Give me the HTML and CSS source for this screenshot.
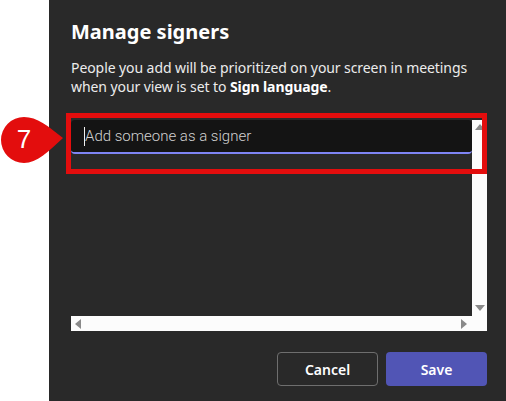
FILE: index.html
```html
<!DOCTYPE html>
<html lang="en">
<head>
    <meta charset="UTF-8">
    <meta name="viewport" content="width=device-width, initial-scale=1.0">
    <title>Manage signers</title>
    <link rel="stylesheet" href="styles.css">
</head>
<body>
    <div class="page">
        <div class="gutter">
            <div class="callout">
                <svg width="64" height="52" viewBox="0 0 64 52">
                    <path d="M24 3 A23 23 0 1 0 24 49 C37 49 48 38 63 24 C48 12 37 3 24 3 Z" fill="#e30d0d"/>
                </svg>
                <span class="callout-num">7</span>
            </div>
        </div>
        <div class="dialog">
            <h1>Manage signers</h1>
            <p class="desc">People you add will be prioritized on your screen in meetings when your view is set to <b>Sign language</b>.</p>

            <div class="picker">
                <div class="picker-body">
                    <div class="field">
                        <span class="caret"></span>
                        <span class="placeholder">Add someone as a signer</span>
                    </div>
                </div>
                <div class="vbar">
                    <span class="arrow up"></span>
                    <span class="arrow down"></span>
                </div>
                <div class="hbar">
                    <span class="arrow left"></span>
                    <span class="arrow right"></span>
                </div>
                <div class="corner"></div>
                <div class="highlight"></div>
            </div>

            <div class="actions">
                <button class="btn cancel">Cancel</button>
                <button class="btn save">Save</button>
            </div>
        </div>
    </div>
</body>
</html>
```

FILE: styles.css
```css
body {
    margin: 0;
    font-family: "Segoe UI", "Noto Sans", sans-serif;
    background-color: white;
}
.page {
    display: flex;
    height: 401px;
}
.gutter {
    width: 49px;
    position: relative;
    flex-shrink: 0;
}
.callout {
    position: absolute;
    left: 0;
    top: 114px;
    width: 64px;
    height: 52px;
}
.callout svg {
    display: block;
}
.callout-num {
    position: absolute;
    left: 2px;
    top: 0;
    width: 44px;
    line-height: 50px;
    text-align: center;
    color: white;
    font-family: "Liberation Sans", Arial, sans-serif;
    font-size: 26px;
}
.dialog {
    flex: 1;
    background-color: #292929;
    padding: 18px 19px 0 22px;
    display: flex;
    flex-direction: column;
}
h1 {
    color: white;
    font-size: 20px;
    font-weight: 700;
    line-height: 28px;
    margin: 0 0 12px 0;
}
.desc {
    color: #ececec;
    font-size: 14px;
    letter-spacing: -0.08px;
    line-height: 19px;
    margin: 0 0 24px 0;
}
.desc b {
    color: white;
}
.picker {
    position: relative;
    display: grid;
    grid-template-columns: 1fr 15px;
    grid-template-rows: 196px 15px;
}
.picker-body {
    background-color: #292929;
}
.field {
    height: 32px;
    background-color: #141414;
    border-bottom: 2px solid #7f85f5;
    border-radius: 4px;
    display: flex;
    align-items: center;
    padding-left: 13px;
}
.caret {
    width: 1px;
    height: 19px;
    background-color: #f0f0f0;
}
.placeholder {
    color: #d2d2d2;
    font-family: Roboto, sans-serif;
    font-weight: 300;
    font-size: 15px;
}
.vbar, .hbar, .corner {
    background-color: #fcfcfc;
}
.vbar {
    display: flex;
    flex-direction: column;
    justify-content: space-between;
    align-items: center;
    padding: 4px 0 5px;
}
.hbar {
    display: flex;
    justify-content: space-between;
    align-items: center;
    padding: 0 5px 0 4px;
}
.arrow {
    width: 0;
    height: 0;
    border: 5px solid transparent;
}
.arrow.up {
    border-bottom: 6px solid #8a8a8a;
    border-top-width: 0;
}
.arrow.down {
    border-top: 6px solid #8a8a8a;
    border-bottom-width: 0;
}
.arrow.left {
    border-right: 6px solid #8a8a8a;
    border-left-width: 0;
}
.arrow.right {
    border-left: 6px solid #8a8a8a;
    border-right-width: 0;
}
.highlight {
    position: absolute;
    left: -5px;
    top: -7px;
    width: 411px;
    height: 51px;
    border: 5px solid #e30d0d;
}
.actions {
    display: flex;
    justify-content: flex-end;
    gap: 8px;
    margin-top: 21px;
}
.btn {
    width: 101px;
    height: 34px;
    border-radius: 4px;
    font-family: inherit;
    font-size: 14px;
    font-weight: 600;
    color: white;
    cursor: pointer;
}
.cancel {
    background-color: transparent;
    border: 1px solid #6e6e6e;
}
.save {
    background-color: #5155b5;
    border: none;
}
```
